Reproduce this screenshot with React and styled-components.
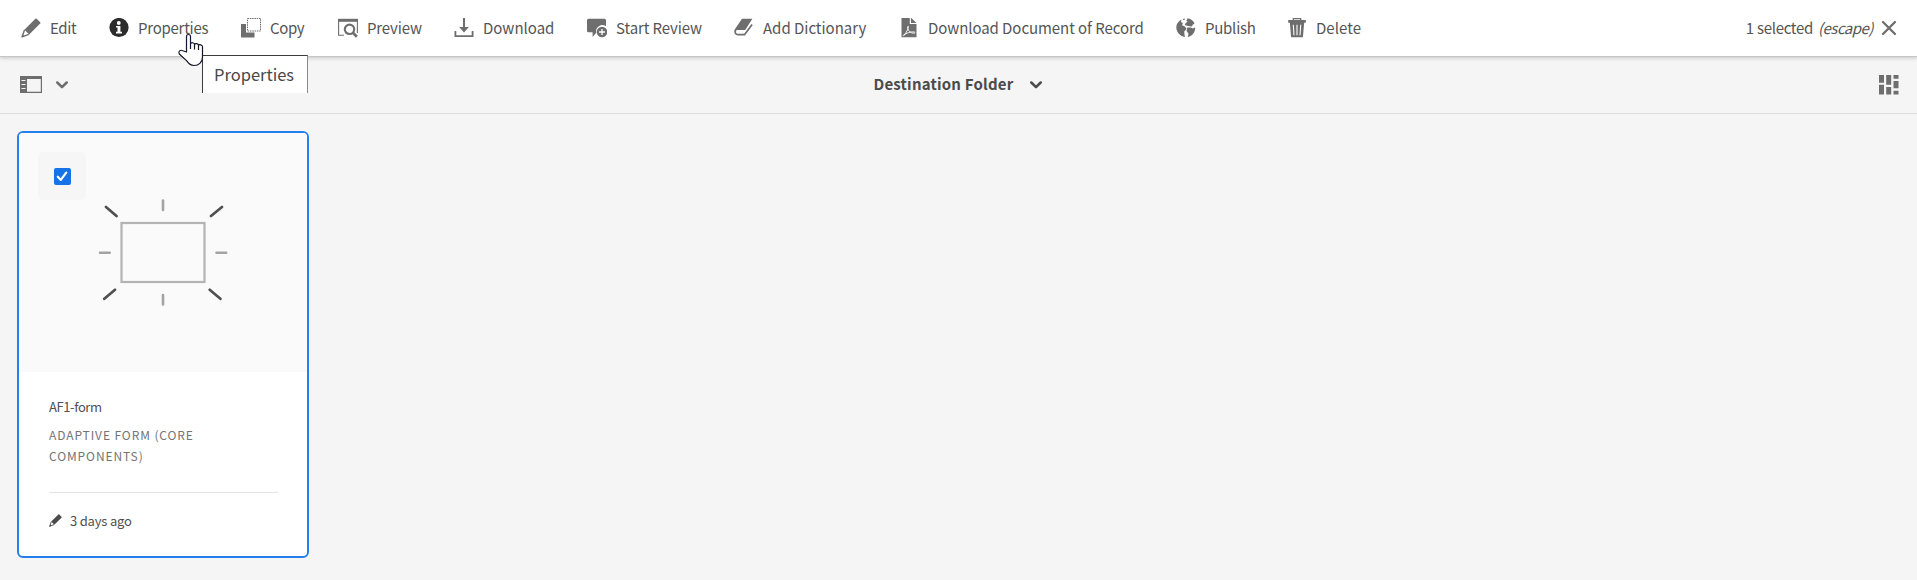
import React from "react";
import styled, { createGlobalStyle } from "styled-components";

const Global = createGlobalStyle`
  body { margin: 0; background: #f5f5f5; overflow: hidden; }
  * { box-sizing: border-box; }
`;

const Page = styled.div`
  width: 1917px;
  height: 580px;
  background: #f5f5f5;
  color: #4b4b4b;
  font-family: "Noto Sans CJK JP", "Noto Sans", sans-serif;
  position: relative;
  overflow: hidden;
`;

const ActionBar = styled.header`
  display: flex;
  align-items: center;
  height: 56px;
  padding-left: 21px;
  background: #fff;
  box-shadow: 0 1px 0 #c6c6c6, 0 2px 4px rgba(0, 0, 0, 0.2);
`;

const Action = styled.button`
  display: flex;
  align-items: center;
  gap: 9px;
  flex: none;
  width: ${(p) => p.$w}px;
  height: 56px;
  padding: 0;
  border: 0;
  background: none;
  color: ${(p) => (p.$active ? "#2c2c2c" : "#6e6e6e")};
`;

const Icon = styled.svg`
  display: block;
  flex: none;
  width: ${(p) => p.$w || 20}px;
  height: ${(p) => p.$h || 20}px;
`;

const Label = styled.span`
  font: ${(p) => p.$weight || 400} ${(p) => p.$size || 15}px/24px "Noto Sans CJK JP", "Noto Sans", sans-serif;
  letter-spacing: ${(p) => p.$ls || 0}px;
  font-style: ${(p) => (p.$italic ? "italic" : "normal")};
  color: ${(p) => p.$color || "#555"};
  white-space: nowrap;
`;

const Selection = styled.div`
  display: flex;
  align-items: center;
  margin-left: auto;
  padding-right: 20px;
  color: #6e6e6e;
  gap: 8px;
`;

const Count = styled(Label)`
  margin-right: -3px;
`;

const SubBar = styled.nav`
  display: grid;
  grid-template-columns: 1fr auto 1fr;
  align-items: center;
  height: 58px;
  padding: 0 18px 0 20px;
  border-bottom: 1px solid #dedede;
  color: #6e6e6e;
`;

const Group = styled.div`
  display: flex;
  align-items: center;
  gap: ${(p) => p.$gap}px;
  justify-content: ${(p) => (p.$end ? "flex-end" : "flex-start")};
  color: ${(p) => p.$color || "#6e6e6e"};
`;

const FolderTitle = styled(Group)`
  margin-right: 3px;

  ${Label} {
    padding-bottom: 2px;
  }
`;

const Card = styled.article`
  width: 292px;
  height: 427px;
  margin: 17px 0 0 17px;
  border: 2px solid #2680eb;
  border-radius: 6px;
  background: #fff;
  overflow: hidden;
`;

const Preview = styled.div`
  position: relative;
  display: flex;
  height: 239px;
  padding: 65px 0 0 79px;
  background: #fafafa;
`;

const CheckArea = styled.div`
  position: absolute;
  left: 19px;
  top: 19px;
  width: 48px;
  height: 48px;
  display: flex;
  align-items: center;
  justify-content: center;
  border-radius: 5px;
  background: #f6f6f6;
`;

const Info = styled.div`
  padding: 23px 29px 0 30px;
  display: flex;
  flex-direction: column;
`;

const Kind = styled.div`
  margin-top: 5px;
  font-size: 12px;
  line-height: 21px;
  letter-spacing: 0.9px;
  color: #747474;
`;

const Modified = styled.div`
  display: flex;
  align-items: center;
  gap: 8px;
  margin-top: 26px;
  padding-top: 16px;
  border-top: 1px solid #e4e4e4;
`;

const Tooltip = styled.div`
  position: absolute;
  left: 202px;
  top: 55px;
  width: 106px;
  height: 38px;
  padding: 6px 0 0 11px;
  background: #fff;
  border: 1px solid #3c3c3c;
  border-right-color: #8a8a8a;
  border-bottom: 0;
`;

const Pointer = styled.svg`
  position: absolute;
  left: 177px;
  top: 33px;
  width: 27px;
  height: 34px;
`;

const PencilPath = () => (
  <>
    <path fill="currentColor" d="M14.4.8a1 1 0 0 1 1.3 0l3.5 3.5a1 1 0 0 1 0 1.3L8.2 16.4 3.4 11.7Z" />
    <path fill="none" stroke="currentColor" strokeWidth="1.4" strokeLinejoin="round" d="M3.5 12 1 18.9l6.8-2.6" />
    <path fill="currentColor" d="m1.7 16.2-1 3.1 3-1Z" />
  </>
);

const icons = {
  edit: <PencilPath />,
  info: (
    <>
      <circle cx="10" cy="9.5" r="9.6" fill="currentColor" />
      <circle cx="9.8" cy="5" r="1.9" fill="#fff" />
      <path fill="#fff" d="M7 8h4.4v5.7H13v1.7H7v-1.7h1.5V9.6H7Z" />
    </>
  ),
  copy: (
    <>
      <path fill="currentColor" d="M0 6h5v8.5h8.5v4.9H0Z" />
      <path fill="none" stroke="currentColor" strokeWidth="1" strokeDasharray="1.5 .8" d="M6.5.5h13v12.5h-13Z" />
    </>
  ),
  preview: (
    <>
      <path fill="currentColor" d="M0 .8h20v3H0Z" />
      <path fill="none" stroke="currentColor" strokeWidth="1.1" d="M.6 2v15.2H6M19.4 2v13" />
      <circle cx="11.5" cy="11.3" r="4.7" fill="none" stroke="currentColor" strokeWidth="2.2" />
      <path stroke="currentColor" strokeWidth="2.7" d="m14.7 14.5 4.2 4.2" />
    </>
  ),
  download: (
    <>
      <path fill="currentColor" d="M9 0h2v9h3.8L10 14.6 5.2 9H9Z" />
      <path fill="currentColor" d="M.5 13h1.8v4.2h15.4V13h1.8v6H.5Z" />
    </>
  ),
  review: (
    <>
      <path fill="currentColor" d="M1.5.8h16A1.500 1.500 0 0 1 19 2.300v5.900a6.400 6.400 0 0 0-9.800 6.600L5.600 19v-4.700H1.500A1.500 1.500 0 0 1 0 12.800V2.300A1.500 1.500 0 0 1 1.500.8Z" />
      <circle cx="15" cy="14" r="5.3" fill="currentColor" />
      <path stroke="#fff" strokeWidth="1.3" d="M15 11v6M12 14h6" />
    </>
  ),
  dictionary: (
    <>
      <path fill="currentColor" d="M8 .8h10.4L11.2 12H3.4C2 12 1 12.7.5 13.7c-.2-1 .1-1.900.7-2.900Z" />
      <path fill="none" stroke="currentColor" strokeWidth="1.7" strokeLinejoin="round" d="M1.7 11.8c-1.300 2.900.1 4.900 2.300 4.900h6.500l7.600-10.200" />
    </>
  ),
  pdf: (
    <>
      <path fill="currentColor" d="M2.5-.3h8.3v6.4h6.7v13.1h-15Z" />
      <path fill="currentColor" d="M12-.3 17.5 5H12Z" />
      <path fill="none" stroke="#fff" strokeWidth=".9" d="M9 8.200c-1 .4-.2 4 2 5.700 2 1.500 5 1.700 5 .6 0-1.500-8.300-.1-11.200 2.200-1.500 1.200.2 1.700 1.400-.5 2.200-3.800 4-8.200 2.800-8Z" />
    </>
  ),
  publish: (
    <>
      <path fill="currentColor" d="M3.600 2.700 5.500 1.500 5 4l1.800 1-.7 2.200 2.200 1 2.100 2-.7 1.900-1.500 1.400.3 3.200.6 2.200C4.200 18.400.4 14.300.3 9.500c0-2.700 1.200-5.100 3.300-6.800Z" />
      <path fill="currentColor" d="M6.700 1 9 .6l-.3 1.200-1.400.3ZM11.300.3c3.400.4 6.100 2.300 7.200 5l-1.600 1.400-1.200 1.700-3.600-.4-3.300-1.100.8-1.700 2-1.700-1.500-.8 1.200-.9Z" />
      <path fill="currentColor" d="M11.400 9.400h3.400l2.100 1 2.300-1.200c.2 4.400-2.700 8.700-7.400 9.800l.7-3.300-2-2.900Z" />
    </>
  ),
  delete: (
    <>
      <path fill="none" stroke="currentColor" strokeWidth="1.2" d="M6.300 2V.7h7.400V2" />
      <path fill="currentColor" d="M1.200 2h17.600v2.700H1.200ZM2.800 4.500h14.400L15.900 19.200H4.100Z" />
      <path stroke="#fff" strokeWidth="1.1" d="m6.300 6.700.7 10.500M10 6.700v10.500M13.700 6.700 13 17.200" />
    </>
  ),
};

const actions = [
  ["edit", "Edit", 88, -0.35],
  ["info", "Properties", 132, -0.25],
  ["copy", "Copy", 97, -0.35],
  ["preview", "Preview", 116, -0.15],
  ["download", "Download", 133, 0],
  ["review", "Start Review", 147, -0.1],
  ["dictionary", "Add Dictionary", 165, -0.02],
  ["pdf", "Download Document of Record", 277, -0.07],
  ["publish", "Publish", 111, -0.25],
  ["delete", "Delete", 100, 0.05],
];

const Chevron = () => (
  <Icon viewBox="0 0 12 8" $w={12} $h={8}>
    <path fill="none" stroke="currentColor" strokeWidth="2.5" strokeLinecap="round" strokeLinejoin="round" d="M1.300 1.500 6 6.200l4.700-4.700" />
  </Icon>
);

export default function App() {
  return (
    <Page>
      <Global />
      <ActionBar>
        {actions.map(([icon, text, w, ls]) => (
          <Action key={text} $w={w} $active={icon === "info"}>
            <Icon viewBox="0 0 20 20">{icons[icon]}</Icon>
            <Label $ls={ls}>{text}</Label>
          </Action>
        ))}
        <Selection>
          <Count $ls={-0.3}>1 selected</Count>
          <Label $italic $ls={-0.5}>(escape)</Label>
          <Icon viewBox="0 0 16 16" $w={16} $h={16}>
            <path stroke="currentColor" strokeWidth="2.3" strokeLinecap="round" d="m2 2 12 12M14 2 2 14" />
          </Icon>
        </Selection>
      </ActionBar>
      <SubBar>
        <Group $gap={14}>
          <Icon viewBox="0 0 22 17" $w={22} $h={17}>
            <path fill="currentColor" d="M0 0h22v3H0Z" />
            <path fill="none" stroke="currentColor" strokeWidth="1.2" d="M.6 1v15.400h20.800V1" />
            <path fill="currentColor" d="M0 3h7v14H0Z" />
            <path stroke="#f5f5f5" strokeWidth="1.1" d="M1.500 4.500h4M1.500 8.500h4M1.500 12.500h4" />
          </Icon>
          <Chevron />
        </Group>
        <FolderTitle $gap={17} $color="#4b4b4b">
          <Label $weight={700} $ls={0.2} $color="#4b4b4b">Destination Folder</Label>
          <Chevron />
        </FolderTitle>
        <Group $end>
          <Icon viewBox="0 0 20 20">
            <path fill="currentColor" d="M0 0h5v7.700H0ZM0 9.800h5v9.800H0ZM7.200 0h5v9.800h-5ZM7.200 12h5v7.600h-5ZM14.500 0h5v3.700h-5ZM14.500 6h5v7.300h-5ZM14.500 15.800h5v3.800h-5Z" />
          </Icon>
        </Group>
      </SubBar>
      <Card>
        <Preview>
          <CheckArea>
            <Icon viewBox="0 0 17 17" $w={17} $h={17}>
              <rect width="17" height="17" rx="2" fill="#1473e6" />
              <path fill="none" stroke="#fff" strokeWidth="2.2" strokeLinecap="round" strokeLinejoin="round" d="m3.800 8.700 3 3.200 5.400-7.200" />
            </Icon>
          </CheckArea>
          <Icon viewBox="98 198 130 110" $w={130} $h={110}>
            <rect x="121.5" y="223" width="83" height="59" fill="none" stroke="#b3b3b3" strokeWidth="2.2" />
            <path stroke="#a3a3a3" strokeWidth="2.6" strokeLinecap="round" d="M163 200.500v9.500M163 295v9.500M100 252.700h9.700M216.500 252.700h9.700" />
            <path stroke="#505050" strokeWidth="2.7" strokeLinecap="round" d="m106 207 10.500 9M222 207l-11 9M115 289.800l-10.700 9M209.700 289.800l10.700 9" />
          </Icon>
        </Preview>
        <Info>
          <Label $size={13} $ls={-0.4} $color="#505050">AF1-form</Label>
          <Kind>ADAPTIVE FORM (CORE COMPONENTS)</Kind>
          <Modified>
            <Icon viewBox="0 0 20 21.5" $w={13} $h={14} color="#4b4b4b"><PencilPath /></Icon>
            <Label $size={13} $ls={-0.2} $color="#505050">3 days ago</Label>
          </Modified>
        </Info>
      </Card>
      <Tooltip><Label $size={16.5} $color="#484848">Properties</Label></Tooltip>
      <Pointer viewBox="0 0 27 34">
        <path fill="#fff" stroke="#14142b" strokeWidth="1.2" strokeLinejoin="round" d="M9.500 19V3.500c0-2.700 4-2.700 4 0V11c.5-1.900 4-1.700 4 .6.5-1.500 4-1.300 4 .8.5-1.200 4-.8 4 1.300V24c0 5-3.500 8.500-8.500 8.500-3.500 0-5.300-1.700-7.200-4.600L2.300 21c-1.500-2.500 1.200-4.700 3.500-3.200ZM13.500 11v5M17.500 12v4.500M21.500 13v4" />
      </Pointer>
    </Page>
  );
}
